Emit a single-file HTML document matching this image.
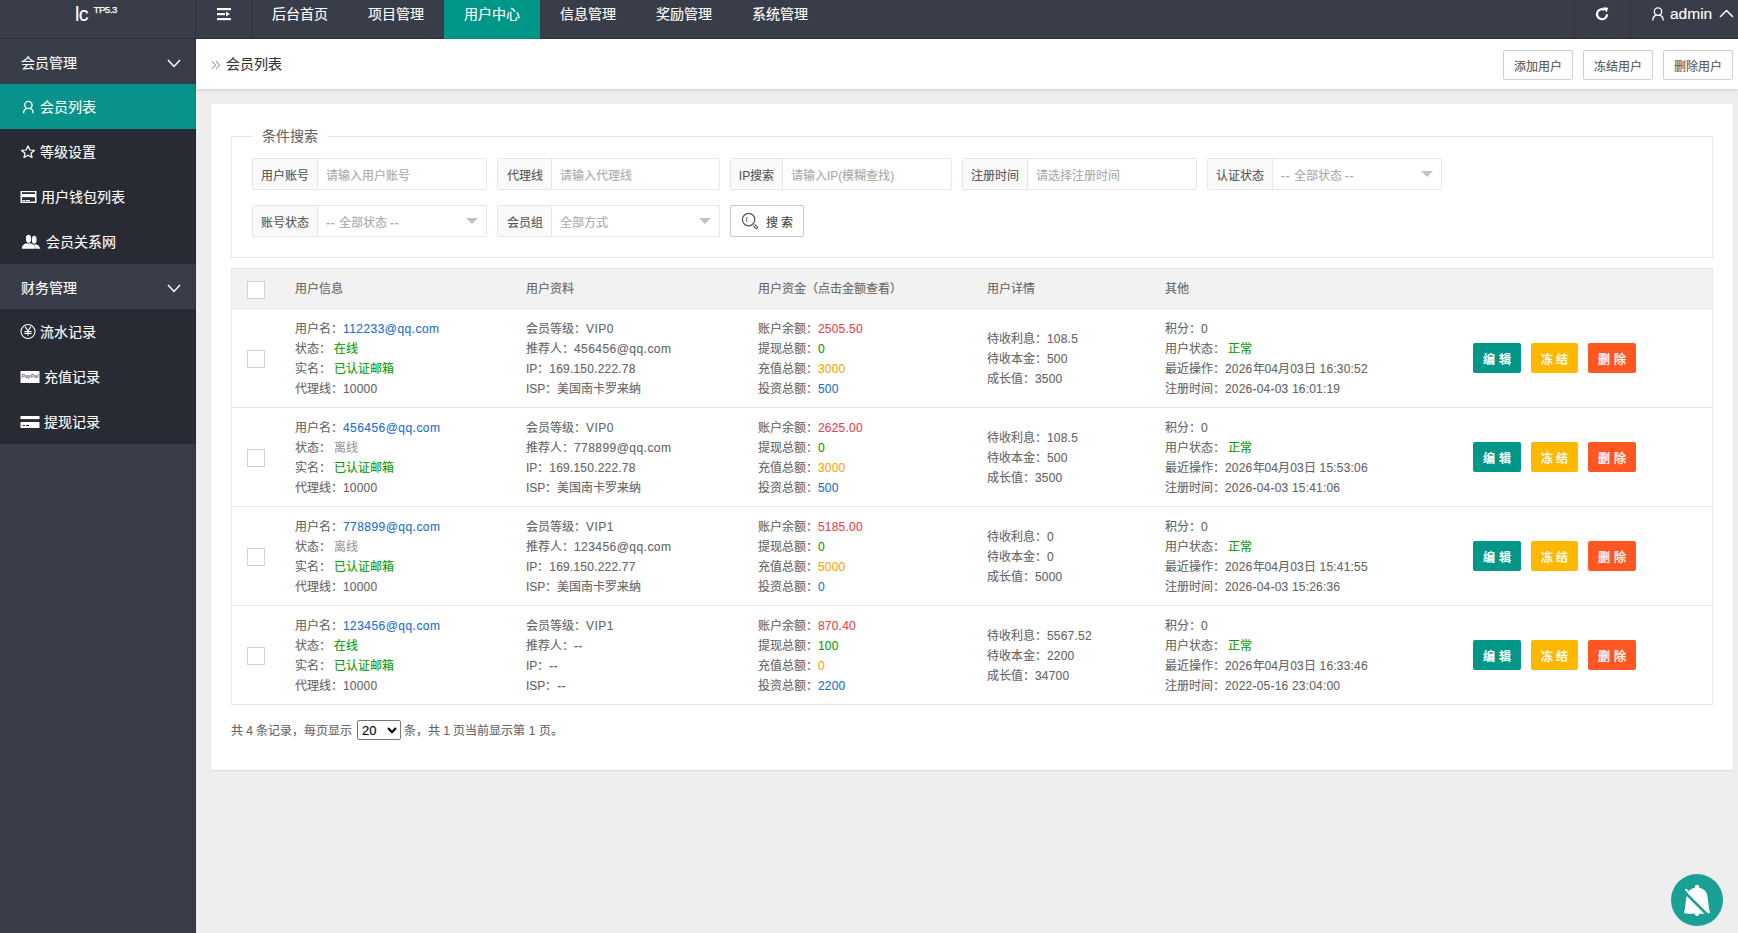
<!DOCTYPE html>
<html lang="zh-CN"><head><meta charset="utf-8"><title>会员列表</title><style>
*{box-sizing:border-box;margin:0;padding:0}
html,body{width:1738px;height:933px;overflow:hidden}
body{position:relative;background:#EEEEEE;font-family:"Liberation Sans",sans-serif;color:#666;-webkit-text-stroke:0.12px currentColor}
.a{position:absolute;white-space:nowrap}
#hdr{left:0;top:0;width:1738px;height:39px;background:#393D49;border-bottom:1px solid #2E313B}
.vl{position:absolute;top:0;width:1px;height:38px;background:#30333D}
.nav{position:absolute;top:0;height:39px;width:96px;color:#fff;font-size:14px;line-height:28px;text-align:center}
.nav.on{background:#009688}
#side{left:0;top:39px;width:196px;height:894px;background:#393D49}
.si{position:absolute;left:0;width:196px;height:45px;color:#fff;font-size:14px;line-height:45px}
.child{background:#282B33}
.on2{background:#07938A}
#crumb{left:196px;top:39px;width:1542px;height:50px;background:#fff;box-shadow:0 1px 4px rgba(0,0,0,.13)}
.tbtn{position:absolute;top:11px;height:30px;width:70px;border:1px solid #D0D0D0;border-radius:2px;background:#fff;color:#555;font-size:12px;line-height:28px;text-align:center;padding-top:1.5px}
#card{left:211px;top:104px;width:1522px;height:666px;background:#fff;box-shadow:0 1px 2px rgba(0,0,0,.08)}
.fs{position:absolute;border:1px solid #E6E6E6}
.grp{position:absolute;height:32px;border:1px solid #E6E6E6;border-radius:2px;background:#fff}
.lab{position:absolute;left:0;top:0;height:30px;background:#FAFAFA;border-right:1px solid #E6E6E6;color:#555;font-size:12px;line-height:30px;text-align:center;padding-top:1.5px}
.ph{position:absolute;top:0;height:30px;line-height:30px;font-size:12px;color:#AAA;padding-top:1.5px}
.tri{position:absolute;width:0;height:0;border-left:6px solid transparent;border-right:6px solid transparent;border-top:6px solid #C2C2C2}
.tl{position:absolute;height:1px;background:#E6E6E6}
.cb{position:absolute;width:18px;height:18px;border:1px solid #D2D2D2;background:#fff}
.tx{position:absolute;font-size:12px;line-height:20px;color:#666;white-space:nowrap;padding-top:1px}
.v{letter-spacing:.45px}
.n{letter-spacing:.2px}
.btn{position:absolute;height:30px;color:#fff;font-size:12px;line-height:30px;text-align:center;border-radius:2px;padding-top:2px;-webkit-text-stroke:.35px #fff}
</style></head><body>
<div id="hdr" class="a">
<div class="a" style="left:75px;top:0.5px;font-size:19.5px;line-height:26px;color:#fff;letter-spacing:-0.6px">lc</div>
<div class="a" style="left:93.5px;top:4.2px;font-size:9.6px;line-height:12px;color:#fff;letter-spacing:-.45px;-webkit-text-stroke:.25px #fff">TP5.3</div>
<div class="vl" style="left:195px"></div>
<div class="vl" style="left:251px"></div>
<svg class="a" style="left:216px;top:7px" width="16" height="14" viewBox="0 0 16 14"><rect x="1" y="1" width="14" height="2.2" fill="#fff"/><rect x="1" y="6" width="8" height="2.2" fill="#fff"/><path d="M10 4.6 L14 7.1 L10 9.6Z" fill="#fff"/><rect x="1" y="11" width="14" height="2.2" fill="#fff"/></svg>
<div class="nav" style="left:252px">后台首页</div>
<div class="nav" style="left:348px">项目管理</div>
<div class="nav on" style="left:444px">用户中心</div>
<div class="nav" style="left:540px">信息管理</div>
<div class="nav" style="left:636px">奖励管理</div>
<div class="nav" style="left:732px">系统管理</div>
<div class="vl" style="left:1574px"></div>
<div class="vl" style="left:1630px"></div>
<svg class="a" style="left:1594px;top:6px" width="16" height="16" viewBox="0 0 16 16"><path d="M13 8.2 A5 5 0 1 1 10.6 3.9" fill="none" stroke="#fff" stroke-width="2.2"/><path d="M9 1.2 L14.2 1.8 L12.6 6.6Z" fill="#fff"/></svg>
<svg class="a" style="left:1651px;top:6px" width="14" height="15" viewBox="0 0 14 15"><circle cx="7" cy="5.6" r="3.7" fill="none" stroke="#fff" stroke-width="1.35"/><path d="M1.8 14.6 C1.9 11.6 3.6 9.7 5.2 9.2 M8.8 9.2 C10.4 9.7 12.1 11.6 12.2 14.6" fill="none" stroke="#fff" stroke-width="1.35"/></svg>
<div class="a" style="left:1670px;top:4px;font-size:15.5px;line-height:20px;color:#fff">admin</div>
<svg class="a" style="left:1719px;top:9px" width="15" height="9" viewBox="0 0 15 9"><path d="M1 8 L7.5 1.5 L14 8" fill="none" stroke="#fff" stroke-width="1.5"/></svg>
</div>
<div id="side" class="a">
<div class="si " style="top:0px">
<div class="a" style="left:21px;top:1.5px;line-height:45px">会员管理</div>
<svg class="a" style="left:167px;top:19.5px" width="14" height="9" viewBox="0 0 14 9"><path d="M1 1 L7 7.5 L13 1" fill="none" stroke="#fff" stroke-width="1.5"/></svg>
</div>
<div class="si on2" style="top:45px">
<svg class="a" style="left:20px;top:0" width="24" height="45" viewBox="20 84 24 45"><circle cx="28.4" cy="105" r="3.7" fill="none" stroke="#fff" stroke-width="1.3"/><path d="M23.5 113.3 C23.6 110.6 25.1 108.9 26.5 108.4 M30.3 108.4 C31.7 108.9 33.2 110.6 33.3 113.3" fill="none" stroke="#fff" stroke-width="1.3"/></svg>
<div class="a" style="left:40px;top:1px;line-height:45px">会员列表</div>
</div>
<div class="si child" style="top:90px">
<svg class="a" style="left:20px;top:0" width="24" height="45" viewBox="20 129 24 45"><path d="M28 145.9 L29.9 150 L34.4 150.4 L31 153.3 L32 157.5 L28 155.2 L24 157.5 L25 153.3 L21.6 150.4 L26.1 150 Z" fill="none" stroke="#fff" stroke-width="1.25" stroke-linejoin="round"/></svg>
<div class="a" style="left:40px;top:1px;line-height:45px">等级设置</div>
</div>
<div class="si child" style="top:135px">
<svg class="a" style="left:20px;top:0" width="24" height="45" viewBox="20 174 24 45"><rect x="20.5" y="191" width="16" height="12" fill="#fff"/><rect x="22" y="192.2" width="13" height="1.8" fill="#282B33"/><rect x="22" y="197.2" width="13" height="4.3" fill="#282B33"/><rect x="22.5" y="200" width="2.6" height="1" fill="#fff"/><rect x="25.8" y="200" width="4" height="1" fill="#fff"/></svg>
<div class="a" style="left:41px;top:1px;line-height:45px">用户钱包列表</div>
</div>
<div class="si child" style="top:180px">
<svg class="a" style="left:20px;top:0" width="24" height="45" viewBox="20 219 24 45"><ellipse cx="28.5" cy="238.8" rx="2.6" ry="4.1" fill="#fff"/><ellipse cx="34.2" cy="239.7" rx="2.4" ry="3.9" fill="#fff"/><path d="M21.8 248.8 C21.9 245.6 23.6 244.2 26 243.6 L31 243.6 C33.4 244.2 35 245.6 35.1 248.8Z" fill="#fff"/><path d="M33.2 244.4 L36.2 244.4 C38.6 245 40 246.2 40 248.8 L35.5 248.8 C35.4 246.8 34.6 245.4 33.2 244.4Z" fill="#fff"/></svg>
<div class="a" style="left:46px;top:1px;line-height:45px">会员关系网</div>
</div>
<div class="si " style="top:225px">
<div class="a" style="left:21px;top:1.5px;line-height:45px">财务管理</div>
<svg class="a" style="left:167px;top:19.5px" width="14" height="9" viewBox="0 0 14 9"><path d="M1 1 L7 7.5 L13 1" fill="none" stroke="#fff" stroke-width="1.5"/></svg>
</div>
<div class="si child" style="top:270px">
<svg class="a" style="left:20px;top:0" width="24" height="45" viewBox="20 309 24 45"><circle cx="28" cy="331.5" r="7" fill="none" stroke="#fff" stroke-width="1.1"/><path d="M25.1 326.6 L28 330.8 L30.9 326.6 M28 330.8 V335.8 M24.4 331.6 H31.6 M24.4 333.4 H31.6" fill="none" stroke="#fff" stroke-width="1.05"/></svg>
<div class="a" style="left:40px;top:1px;line-height:45px">流水记录</div>
</div>
<div class="si child" style="top:315px">
<svg class="a" style="left:20px;top:0" width="24" height="45" viewBox="20 354 24 45"><rect x="20.5" y="371" width="19" height="12" fill="#fff"/><text x="30" y="378.3" font-size="5.2" fill="#6a6a8a" text-anchor="middle" font-family="Liberation Sans" font-style="italic" font-weight="bold">PayPal</text></svg>
<div class="a" style="left:44px;top:1px;line-height:45px">充值记录</div>
</div>
<div class="si child" style="top:360px">
<svg class="a" style="left:20px;top:0" width="24" height="45" viewBox="20 399 24 45"><rect x="20.5" y="416" width="19" height="3.1" fill="#fff"/><rect x="20.5" y="422" width="19" height="6" fill="#fff"/><rect x="22.8" y="425" width="2.2" height="1" fill="#282B33"/><rect x="25.9" y="425" width="3.2" height="1" fill="#282B33"/></svg>
<div class="a" style="left:44px;top:1px;line-height:45px">提现记录</div>
</div>
<div class="a" style="left:195px;top:0;width:1px;height:894px;background:rgba(0,0,0,.12)"></div>
</div>
<div id="crumb" class="a">
<svg class="a" style="left:15px;top:21px" width="10" height="10" viewBox="0 0 10 10"><path d="M1 1 L4.5 5 L1 9 M5 1 L8.5 5 L5 9" fill="none" stroke="#999" stroke-width="1.1"/></svg>
<div class="a" style="left:30px;top:15px;font-size:14px;line-height:20px;color:#333">会员列表</div>
<div class="tbtn" style="left:1307px">添加用户</div>
<div class="tbtn" style="left:1387px">冻结用户</div>
<div class="tbtn" style="left:1467px">删除用户</div>
</div>
<div id="card" class="a"></div>
<div class="fs" style="left:231px;top:136px;width:1482px;height:122px"></div>
<div class="a" style="left:252px;top:130px;width:76px;height:12px;background:#fff"></div>
<div class="a" style="left:262px;top:126px;font-size:14px;line-height:20px;color:#666">条件搜索</div>
<div class="grp" style="left:252px;top:158px;width:235px">
<div class="lab" style="width:65px">用户账号</div>
<div class="ph" style="left:73px">请输入用户账号</div>
</div>
<div class="grp" style="left:497px;top:158px;width:223px">
<div class="lab" style="width:54px">代理线</div>
<div class="ph" style="left:62px">请输入代理线</div>
</div>
<div class="grp" style="left:730px;top:158px;width:222px">
<div class="lab" style="width:52px">IP搜索</div>
<div class="ph" style="left:60px">请输入IP(模糊查找)</div>
</div>
<div class="grp" style="left:962px;top:158px;width:235px">
<div class="lab" style="width:65px">注册时间</div>
<div class="ph" style="left:73px">请选择注册时间</div>
</div>
<div class="grp" style="left:1207px;top:158px;width:235px">
<div class="lab" style="width:65px">认证状态</div>
<div class="ph" style="left:73px"><span class="v">-- </span>全部状态 <span class="v">--</span></div>
<div class="tri" style="left:213px;top:12px"></div>
</div>
<div class="grp" style="left:252px;top:205px;width:235px">
<div class="lab" style="width:65px">账号状态</div>
<div class="ph" style="left:73px"><span class="v">-- </span>全部状态 <span class="v">--</span></div>
<div class="tri" style="left:213px;top:12px"></div>
</div>
<div class="grp" style="left:497px;top:205px;width:223px">
<div class="lab" style="width:54px">会员组</div>
<div class="ph" style="left:62px">全部方式</div>
<div class="tri" style="left:201px;top:12px"></div>
</div>
<div class="a" style="left:730px;top:205px;width:74px;height:32px;border:1px solid #C9C9C9;border-radius:2px;background:#fff"></div>
<svg class="a" style="left:741px;top:212px" width="19" height="19" viewBox="0 0 19 19"><circle cx="7.6" cy="7.6" r="6.2" fill="none" stroke="#555" stroke-width="1.2"/><path d="M12.3 13.6 L14.6 16.2 A1.1 1.1 0 0 0 16.2 14.6 L13.6 12.3" fill="none" stroke="#555" stroke-width="1.1"/><path d="M6.2 5 Q4.4 7.4 6.2 9.9" fill="none" stroke="#555" stroke-width="1"/></svg>
<div class="a" style="left:766px;top:211px;font-size:12px;line-height:20px;color:#444;padding-top:1.5px">搜 索</div>
<div class="a" style="left:231px;top:268px;width:1482px;height:437px;border:1px solid #E6E6E6"></div>
<div class="a" style="left:232px;top:269px;width:1480px;height:39px;background:#F2F2F2"></div>
<div class="tl" style="left:231px;top:308px;width:1482px"></div>
<div class="tl" style="left:231px;top:407px;width:1482px"></div>
<div class="tl" style="left:231px;top:506px;width:1482px"></div>
<div class="tl" style="left:231px;top:605px;width:1482px"></div>
<div class="cb" style="left:247px;top:281px"></div>
<div class="tx" style="left:295px;top:278px">用户信息</div>
<div class="tx" style="left:526px;top:278px">用户资料</div>
<div class="tx" style="left:758px;top:278px">用户资金（点击金额查看）</div>
<div class="tx" style="left:987px;top:278px">用户详情</div>
<div class="tx" style="left:1165px;top:278px">其他</div>
<div class="cb" style="left:247px;top:350px"></div>
<div class="tx" style="left:295px;top:318px">用户名：<span style="color:#1E6FD0"><span class="v">112233@qq.com</span></span></div>
<div class="tx" style="left:295px;top:338px">状态：&nbsp;<span style="color:#0A9A0A">在线</span></div>
<div class="tx" style="left:295px;top:358px">实名：&nbsp;<span style="color:#0A9A0A">已认证邮箱</span></div>
<div class="tx" style="left:295px;top:378px">代理线：<span class="n">10000</span></div>
<div class="tx" style="left:526px;top:318px">会员等级：<span class="v">VIP0</span></div>
<div class="tx" style="left:526px;top:338px">推荐人：<span class="v">456456@qq.com</span></div>
<div class="tx" style="left:526px;top:358px">IP：<span class="n">169.150.222.78</span></div>
<div class="tx" style="left:526px;top:378px">ISP：美国南卡罗来纳</div>
<div class="tx" style="left:758px;top:318px">账户余额：<span style="color:#E8454B"><span class="n">2505.50</span></span></div>
<div class="tx" style="left:758px;top:338px">提现总额：<span style="color:#0A9A0A"><span class="n">0</span></span></div>
<div class="tx" style="left:758px;top:358px">充值总额：<span style="color:#FFA500"><span class="n">3000</span></span></div>
<div class="tx" style="left:758px;top:378px">投资总额：<span style="color:#1E6FD0"><span class="n">500</span></span></div>
<div class="tx" style="left:1165px;top:318px">积分：<span class="n">0</span></div>
<div class="tx" style="left:1165px;top:338px">用户状态：&nbsp;<span style="color:#0A9A0A">正常</span></div>
<div class="tx" style="left:1165px;top:358px">最近操作：<span class="n">2026</span>年<span class="n">04</span>月<span class="n">03</span>日<span class="n"> 16:30:52</span></div>
<div class="tx" style="left:1165px;top:378px">注册时间：<span class="n">2026-04-03 16:01:19</span></div>
<div class="tx" style="left:987px;top:328px">待收利息：<span class="n">108.5</span></div>
<div class="tx" style="left:987px;top:348px">待收本金：<span class="n">500</span></div>
<div class="tx" style="left:987px;top:368px">成长值：<span class="n">3500</span></div>
<div class="btn" style="left:1473px;top:343px;width:48px;background:#009688">编 辑</div>
<div class="btn" style="left:1531px;top:343px;width:47px;background:#FFB800">冻 结</div>
<div class="btn" style="left:1588px;top:343px;width:48px;background:#FF5722">删 除</div>
<div class="cb" style="left:247px;top:449px"></div>
<div class="tx" style="left:295px;top:417px">用户名：<span style="color:#1E6FD0"><span class="v">456456@qq.com</span></span></div>
<div class="tx" style="left:295px;top:437px">状态：&nbsp;<span style="color:#999">离线</span></div>
<div class="tx" style="left:295px;top:457px">实名：&nbsp;<span style="color:#0A9A0A">已认证邮箱</span></div>
<div class="tx" style="left:295px;top:477px">代理线：<span class="n">10000</span></div>
<div class="tx" style="left:526px;top:417px">会员等级：<span class="v">VIP0</span></div>
<div class="tx" style="left:526px;top:437px">推荐人：<span class="v">778899@qq.com</span></div>
<div class="tx" style="left:526px;top:457px">IP：<span class="n">169.150.222.78</span></div>
<div class="tx" style="left:526px;top:477px">ISP：美国南卡罗来纳</div>
<div class="tx" style="left:758px;top:417px">账户余额：<span style="color:#E8454B"><span class="n">2625.00</span></span></div>
<div class="tx" style="left:758px;top:437px">提现总额：<span style="color:#0A9A0A"><span class="n">0</span></span></div>
<div class="tx" style="left:758px;top:457px">充值总额：<span style="color:#FFA500"><span class="n">3000</span></span></div>
<div class="tx" style="left:758px;top:477px">投资总额：<span style="color:#1E6FD0"><span class="n">500</span></span></div>
<div class="tx" style="left:1165px;top:417px">积分：<span class="n">0</span></div>
<div class="tx" style="left:1165px;top:437px">用户状态：&nbsp;<span style="color:#0A9A0A">正常</span></div>
<div class="tx" style="left:1165px;top:457px">最近操作：<span class="n">2026</span>年<span class="n">04</span>月<span class="n">03</span>日<span class="n"> 15:53:06</span></div>
<div class="tx" style="left:1165px;top:477px">注册时间：<span class="n">2026-04-03 15:41:06</span></div>
<div class="tx" style="left:987px;top:427px">待收利息：<span class="n">108.5</span></div>
<div class="tx" style="left:987px;top:447px">待收本金：<span class="n">500</span></div>
<div class="tx" style="left:987px;top:467px">成长值：<span class="n">3500</span></div>
<div class="btn" style="left:1473px;top:442px;width:48px;background:#009688">编 辑</div>
<div class="btn" style="left:1531px;top:442px;width:47px;background:#FFB800">冻 结</div>
<div class="btn" style="left:1588px;top:442px;width:48px;background:#FF5722">删 除</div>
<div class="cb" style="left:247px;top:548px"></div>
<div class="tx" style="left:295px;top:516px">用户名：<span style="color:#1E6FD0"><span class="v">778899@qq.com</span></span></div>
<div class="tx" style="left:295px;top:536px">状态：&nbsp;<span style="color:#999">离线</span></div>
<div class="tx" style="left:295px;top:556px">实名：&nbsp;<span style="color:#0A9A0A">已认证邮箱</span></div>
<div class="tx" style="left:295px;top:576px">代理线：<span class="n">10000</span></div>
<div class="tx" style="left:526px;top:516px">会员等级：<span class="v">VIP1</span></div>
<div class="tx" style="left:526px;top:536px">推荐人：<span class="v">123456@qq.com</span></div>
<div class="tx" style="left:526px;top:556px">IP：<span class="n">169.150.222.77</span></div>
<div class="tx" style="left:526px;top:576px">ISP：美国南卡罗来纳</div>
<div class="tx" style="left:758px;top:516px">账户余额：<span style="color:#E8454B"><span class="n">5185.00</span></span></div>
<div class="tx" style="left:758px;top:536px">提现总额：<span style="color:#0A9A0A"><span class="n">0</span></span></div>
<div class="tx" style="left:758px;top:556px">充值总额：<span style="color:#FFA500"><span class="n">5000</span></span></div>
<div class="tx" style="left:758px;top:576px">投资总额：<span style="color:#1E6FD0"><span class="n">0</span></span></div>
<div class="tx" style="left:1165px;top:516px">积分：<span class="n">0</span></div>
<div class="tx" style="left:1165px;top:536px">用户状态：&nbsp;<span style="color:#0A9A0A">正常</span></div>
<div class="tx" style="left:1165px;top:556px">最近操作：<span class="n">2026</span>年<span class="n">04</span>月<span class="n">03</span>日<span class="n"> 15:41:55</span></div>
<div class="tx" style="left:1165px;top:576px">注册时间：<span class="n">2026-04-03 15:26:36</span></div>
<div class="tx" style="left:987px;top:526px">待收利息：<span class="n">0</span></div>
<div class="tx" style="left:987px;top:546px">待收本金：<span class="n">0</span></div>
<div class="tx" style="left:987px;top:566px">成长值：<span class="n">5000</span></div>
<div class="btn" style="left:1473px;top:541px;width:48px;background:#009688">编 辑</div>
<div class="btn" style="left:1531px;top:541px;width:47px;background:#FFB800">冻 结</div>
<div class="btn" style="left:1588px;top:541px;width:48px;background:#FF5722">删 除</div>
<div class="cb" style="left:247px;top:647px"></div>
<div class="tx" style="left:295px;top:615px">用户名：<span style="color:#1E6FD0"><span class="v">123456@qq.com</span></span></div>
<div class="tx" style="left:295px;top:635px">状态：&nbsp;<span style="color:#0A9A0A">在线</span></div>
<div class="tx" style="left:295px;top:655px">实名：&nbsp;<span style="color:#0A9A0A">已认证邮箱</span></div>
<div class="tx" style="left:295px;top:675px">代理线：<span class="n">10000</span></div>
<div class="tx" style="left:526px;top:615px">会员等级：<span class="v">VIP1</span></div>
<div class="tx" style="left:526px;top:635px">推荐人：<span class="n">--</span></div>
<div class="tx" style="left:526px;top:655px">IP：<span class="n">--</span></div>
<div class="tx" style="left:526px;top:675px">ISP：<span class="n">--</span></div>
<div class="tx" style="left:758px;top:615px">账户余额：<span style="color:#E8454B"><span class="n">870.40</span></span></div>
<div class="tx" style="left:758px;top:635px">提现总额：<span style="color:#0A9A0A"><span class="n">100</span></span></div>
<div class="tx" style="left:758px;top:655px">充值总额：<span style="color:#FFA500"><span class="n">0</span></span></div>
<div class="tx" style="left:758px;top:675px">投资总额：<span style="color:#1E6FD0"><span class="n">2200</span></span></div>
<div class="tx" style="left:1165px;top:615px">积分：<span class="n">0</span></div>
<div class="tx" style="left:1165px;top:635px">用户状态：&nbsp;<span style="color:#0A9A0A">正常</span></div>
<div class="tx" style="left:1165px;top:655px">最近操作：<span class="n">2026</span>年<span class="n">04</span>月<span class="n">03</span>日<span class="n"> 16:33:46</span></div>
<div class="tx" style="left:1165px;top:675px">注册时间：<span class="n">2022-05-16 23:04:00</span></div>
<div class="tx" style="left:987px;top:625px">待收利息：<span class="n">5567.52</span></div>
<div class="tx" style="left:987px;top:645px">待收本金：<span class="n">2200</span></div>
<div class="tx" style="left:987px;top:665px">成长值：<span class="n">34700</span></div>
<div class="btn" style="left:1473px;top:640px;width:48px;background:#009688">编 辑</div>
<div class="btn" style="left:1531px;top:640px;width:47px;background:#FFB800">冻 结</div>
<div class="btn" style="left:1588px;top:640px;width:48px;background:#FF5722">删 除</div>
<div class="tx" style="left:231px;top:720px">共 4 条记录，每页显示</div>
<div class="a" style="left:357px;top:720px;width:44px;height:20px;border:1px solid #767676;border-radius:2px;background:#fff"></div>
<div class="a" style="left:362px;top:722px;font-size:13px;line-height:18px;color:#000">20</div>
<svg class="a" style="left:387px;top:727px" width="10" height="7" viewBox="0 0 10 7"><path d="M1 1 L5 5.3 L9 1" fill="none" stroke="#000" stroke-width="2"/></svg>
<div class="tx" style="left:404px;top:720px">条，共 1 页当前显示第 1 页。</div>
<svg class="a" style="left:1671px;top:874px" width="52" height="52" viewBox="0 0 52 52"><circle cx="26" cy="26" r="26" fill="#1AA094"/><path d="M13.6 36.5 C14.8 30 15 23 16.3 19.5 C17.8 15.6 21.2 13.6 26 13.4 C30.8 13.6 34.2 15.6 35.7 19.5 C37 23 37.2 30 38.4 36.5 Q39.6 37.6 38.8 39 Q38 39.7 35 39.7 L17 39.7 Q14 39.7 13.2 39 Q12.4 37.6 13.6 36.5Z" fill="#fff"/><circle cx="26" cy="13" r="2.3" fill="#fff"/><circle cx="26" cy="40" r="2.1" fill="#fff"/><path d="M12.4 16.8 L37.6 42" stroke="#1AA094" stroke-width="2.6"/><path d="M14.4 15.2 L37.6 38.4" stroke="#fff" stroke-width="1.9"/></svg>
</body></html>
